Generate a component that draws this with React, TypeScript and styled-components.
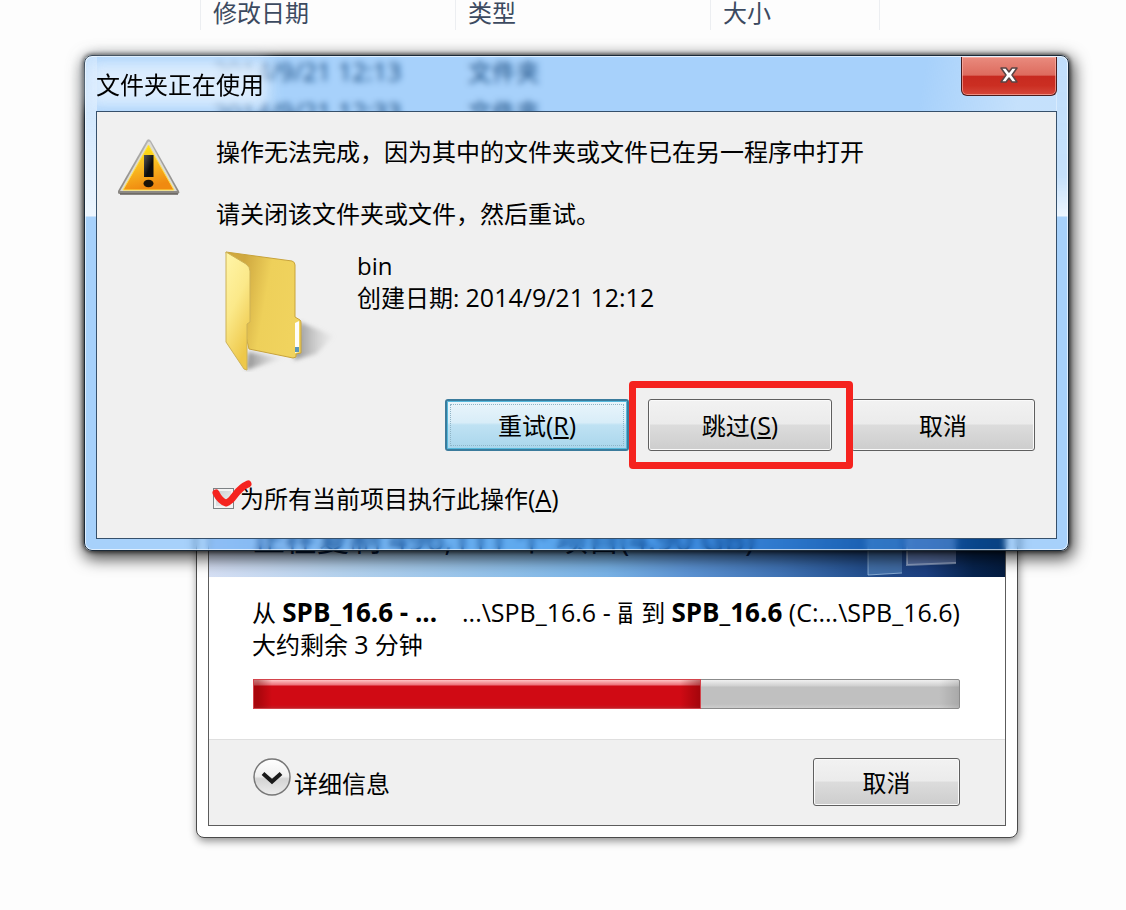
import React from "react";
import styled, { createGlobalStyle, css } from "styled-components";

const GlobalStyle = createGlobalStyle`
  *, *::before, *::after { box-sizing: border-box; }
  body {
    margin: 0;
    background: #fdfdfd;
    color: #000;
    font-family: "Open Sans", "Noto Sans CJK SC", sans-serif;
    font-size: 24px;
    line-height: 32px;
  }
  h1, h2, p { margin: 0; font-size: inherit; font-weight: 400; }
`;

const Desktop = styled.main`
  display: grid;
  grid-template: 1fr / minmax(0, 1fr);
  min-height: 100vh;
  overflow: hidden;
`;

/* Latin runs are set slightly larger so they balance the Chinese glyphs */
const Latin = styled.span`
  font-size: 25px;
  line-height: 1;
`;

const Strong = styled.b`
  font-size: 26px;
  line-height: 1;
`;

/* ---------- file list behind the windows ---------- */

const ListLayer = styled.div`
  grid-area: 1 / 1;
  padding-left: 200px;
`;

const FileTable = styled.table`
  border-collapse: collapse;
  table-layout: fixed;
  width: 680px;
`;

const HeadCell = styled.th<{ $width: number }>`
  width: ${(p) => p.$width}px;
  height: 52px;
  padding: 0;
  vertical-align: top;
  text-align: left;
  font-weight: 400;
  color: #3c4a60;
`;

const HeadLabel = styled.div<{ $last?: boolean }>`
  height: 30px;
  padding-left: 12px;
  line-height: 26px;
  border-left: 1px solid #eceef1;
  ${(p) => p.$last && css`border-right: 1px solid #eceef1;`}
`;

const FileCell = styled.td`
  height: 40px;
  padding: 0 0 0 13px;
  color: #1c2c3c;
`;

/* ---------- windows ---------- */

const WindowLayer = styled.div`
  grid-area: 1 / 1;
  padding: 55px 57px 72px 84px;
`;

const GlassDialog = styled.section`
  position: relative;
  z-index: 2;
  padding: 0 11px 11px;
  border: 1px solid #1b2a38;
  border-radius: 8px;
  background:
    linear-gradient(180deg, rgba(255, 255, 255, 0.3), rgba(255, 255, 255, 0.8) 160px, transparent 161px) left top / 12px 100% no-repeat,
    linear-gradient(180deg, rgba(255, 255, 255, 0.3), rgba(255, 255, 255, 0.35) 120px, rgba(255, 255, 255, 0.8) 160px, transparent 161px) right top / 12px 100% no-repeat,
    linear-gradient(100deg, transparent 30%, rgba(255, 255, 255, 0.35) 80%) right 11px top / 190px 55px no-repeat,
    rgba(13, 130, 247, 0.36);
  backdrop-filter: blur(3px);
  box-shadow:
    inset 0 0 0 1px rgba(255, 255, 255, 0.65),
    0 0 4px 1px rgba(0, 0, 0, 0.65),
    2px 5px 16px 3px rgba(0, 0, 0, 0.7);
`;

const TitleBar = styled.header`
  display: flex;
  justify-content: space-between;
  align-items: flex-start;
  height: 55px;
`;

const Title = styled.h1`
  position: relative;
  margin-top: 13px;
  &::before {
    content: "";
    position: absolute;
    z-index: -1;
    inset: -8px -4px -6px -8px;
    background: rgba(226, 240, 254, 0.92);
    filter: blur(8px);
  }
`;

const CloseButton = styled.button`
  display: flex;
  align-items: center;
  justify-content: center;
  width: 96px;
  height: 39px;
  margin-top: 1px;
  padding: 0 0 2px;
  border: 1px solid #4a1c1c;
  border-top: 0;
  border-radius: 0 0 6px 6px;
  background: linear-gradient(180deg, #e98b7e 0, #dd6b5e 48%, #c72a20 50%, #cb2e22 75%, #d5473a 100%);
  box-shadow: inset 0 0 0 1px rgba(255, 190, 180, 0.6);
`;

const DialogPanel = styled.div`
  display: grid;
  grid-template-columns: 98px minmax(0, 1fr);
  padding: 24px 21px 23px;
  border: 1px solid #36506b;
  background: #f0f0f0;
`;

const WarningSlot = styled.div`
  padding-top: 2px;
`;

const Message = styled.div`
  display: grid;
  gap: 30px;
`;

const ItemRow = styled.div`
  display: flex;
  margin-top: 18px;
`;

const ItemInfo = styled.div`
  padding-top: 2px;
`;

const ButtonRow = styled.div`
  display: flex;
  justify-content: flex-end;
  gap: 19px;
  margin-top: 27px;
`;

const PushButton = styled.button<{ $primary?: boolean; $compact?: boolean }>`
  width: ${(p) => (p.$compact ? 147 : 184)}px;
  height: ${(p) => (p.$compact ? 48 : 52)}px;
  padding: 2px 0 0;
  border: 1px solid #5f5f5f;
  border-radius: 3px;
  background: linear-gradient(180deg, #f2f2f2 0, #ebebeb 48%, #dcdcdc 50%, #cdcdcd 100%);
  box-shadow: inset 0 0 0 1px #fafafa;
  color: #000;
  font: inherit;
  ${(p) =>
    p.$primary &&
    css`
      border: 2px solid #3b7b9c;
      background: linear-gradient(180deg, #eaf5fb 0, #d8edf8 45%, #bfe2f3 50%, #a9d6ec 100%);
      box-shadow: inset 0 0 0 1px #57b9dc;
      outline: 1px dotted #8fb4c6;
      outline-offset: -6px;
    `}
`;

const Highlight = styled.div`
  position: relative;
  display: flex;
  &::after {
    content: "";
    position: absolute;
    inset: -18px -21px -18px -19px;
    border: 7px solid #f5231f;
    border-radius: 4px;
    pointer-events: none;
  }
`;

const CheckRow = styled.div`
  position: relative;
  display: flex;
  align-items: center;
  gap: 6px;
  margin: 32px 0 0 -3px;
`;

const CheckBox = styled.input`
  appearance: none;
  width: 21px;
  height: 21px;
  margin: 0 0 2px;
  border: 1px solid #7d8285;
  background: linear-gradient(135deg, #c5c9cd, #f6f6f6);
  box-shadow: inset 0 0 0 2px #f4f4f4;
`;

const RedTick = styled.svg`
  position: absolute;
  left: -2px;
  top: -4px;
  pointer-events: none;
`;

/* ---------- copy progress window ---------- */

const ProgressWindow = styled.section`
  position: relative;
  z-index: 1;
  margin: -67px 51px 0 112px;
  padding: 11px;
  border: 1px solid #4a4a4a;
  border-radius: 8px;
  background: #fff;
  box-shadow: 1px 3px 8px rgba(0, 0, 0, 0.45);
`;

const ProgressPanel = styled.div`
  border: 1px solid #5c5c5c;
  background: #fff;
`;

const Banner = styled.header`
  position: relative;
  height: 80px;
  padding-left: 44px;
  overflow: hidden;
  background: linear-gradient(90deg, #d6e0f5 0, #b4d2ee 17%, #8fc0ea 38%, #78b2e6 50%, #5c93d3 60%, #3f72b4 72%, #24508f 82%, #1c3f80 90%, #07244f 96%, #041c40 100%);
`;

const BannerTitle = styled.h2`
  position: relative;
  color: #06204a;
  font-size: 32px;
  line-height: 84px;
  white-space: nowrap;
`;

const BannerArt = styled.svg`
  position: absolute;
  right: 0;
  top: 0;
`;

const ProgressBody = styled.div`
  padding: 20px 45px 30px 43px;
`;

const CopyLine = styled.p`
  display: flex;
  gap: 8px;
  height: 32px;
  white-space: pre;
`;

const Source = styled.span`
  margin-right: auto;
`;

const ClippedGlyph = styled.span`
  display: inline-block;
  width: 16px;
  height: 32px;
  overflow: hidden;
  vertical-align: bottom;
`;

const Track = styled.div`
  height: 30px;
  margin: 18px 0 0 1px;
  border: 1px solid #8b8b8b;
  border-radius: 2px;
  background:
    linear-gradient(90deg, transparent calc(100% - 20px), rgba(0, 0, 0, 0.12)),
    linear-gradient(180deg, #f0f0f0 0, #cfcfcf 6px, #c0c0c0 7px, #c0c0c0 24px, #cdcdcd 100%);
`;

const Fill = styled.div`
  height: 30px;
  margin: -1px;
  border: 1px solid #d3444c;
  background:
    linear-gradient(90deg, rgba(110, 0, 0, 0.4) 4px, transparent 18px, transparent calc(100% - 20px), rgba(110, 0, 0, 0.45)),
    linear-gradient(180deg, #ffc4c4 0, #ec7078 5px, #d00a14 6px, #d00a14 25px, #c41c24 100%);
`;

const Footer = styled.footer`
  display: flex;
  justify-content: space-between;
  padding: 18px 45px 19px 44px;
  border-top: 1px solid #dfdfdf;
  background: #f0f0f0;
`;

const DetailsButton = styled.button`
  display: flex;
  gap: 3px;
  padding: 0;
  border: 0;
  background: none;
  color: #000;
  font: inherit;
`;

const DetailsText = styled.span`
  padding-top: 10px;
`;

const CloseIcon = () => (
  <svg width="20" height="18" viewBox="0 0 20 18" aria-hidden="true">
    <path
      d="M2 2h5l3 4 3-4h5l-5 7 5 7h-5l-3-4-3 4H2l5-7z"
      fill="#fff"
      stroke="#5b4444"
      strokeWidth="1.5"
      strokeLinejoin="round"
    />
  </svg>
);

const WarningIcon = () => (
  <svg width="64" height="60" viewBox="0 0 64 60" aria-hidden="true">
    <defs>
      <linearGradient id="warnFill" x1="0" y1="0" x2="0.3" y2="1">
        <stop offset="0" stopColor="#fff200" />
        <stop offset="0.45" stopColor="#fbc524" />
        <stop offset="1" stopColor="#f08a10" />
      </linearGradient>
      <linearGradient id="warnRim" x1="0" y1="0" x2="0" y2="1">
        <stop offset="0" stopColor="#b5b5b5" />
        <stop offset="1" stopColor="#8a8782" />
      </linearGradient>
      <linearGradient id="warnMark" x1="0" y1="0" x2="1" y2="1">
        <stop offset="0" stopColor="#555" />
        <stop offset="0.6" stopColor="#0c0c0c" />
      </linearGradient>
    </defs>
    <path d="M29 2q2-2 4 1l28 50q1 3-2 3H2q-3 0-2-3z" fill="url(#warnRim)" />
    <path d="M2 56h58" stroke="#66625c" strokeWidth="1.5" />
    <path d="M30 4q1-1 2 0l27 49H2z" fill="#dedcd2" />
    <path d="M30.5 7 56 52H5z" fill="url(#warnFill)" stroke="#ffe14a" />
    <path d="M26 17h9.500v22H26z" fill="url(#warnMark)" />
    <ellipse cx="30.500" cy="45.500" rx="5" ry="3.800" fill="#1c1408" />
  </svg>
);

const FolderIcon = () => (
  <svg width="141" height="124" viewBox="0 0 141 124" aria-hidden="true">
    <defs>
      <linearGradient id="folderFront" x1="0" y1="0" x2="0.4" y2="1">
        <stop offset="0" stopColor="#fff5a8" />
        <stop offset="0.5" stopColor="#fbe98a" />
        <stop offset="1" stopColor="#eec84a" />
      </linearGradient>
      <linearGradient id="folderBack" x1="0" y1="0" x2="1" y2="0.25">
        <stop offset="0" stopColor="#d3a93c" />
        <stop offset="0.25" stopColor="#cfa840" />
        <stop offset="0.6" stopColor="#eed05a" />
        <stop offset="1" stopColor="#f0d35e" />
      </linearGradient>
      <linearGradient id="folderShade" x1="0" y1="0" x2="1" y2="0">
        <stop offset="0" stopColor="#6c6c6c" stopOpacity="0.75" />
        <stop offset="1" stopColor="#b5b5b5" stopOpacity="0.05" />
      </linearGradient>
      <filter id="folderSoft" x="-20%" y="-20%" width="140%" height="140%">
        <feGaussianBlur stdDeviation="2" />
      </filter>
    </defs>
    <path d="M84 74l34 14-18 18-22 6z" fill="url(#folderShade)" filter="url(#folderSoft)" />
    <path d="M32 104l36 6-38 12z" fill="url(#folderShade)" filter="url(#folderSoft)" />
    <path d="M10 4 76 13q3 1 3 4v52l5 3q1 1 1 3v30l-5 1v3l-3 1-44-9z" fill="url(#folderBack)" stroke="#c8a33a" />
    <path d="M79 75l4-2v31l-4 1z" fill="#fdfdfb" />
    <path d="M79 99h4v5h-4z" fill="#5b95b8" />
    <path d="M10 4l20 12q4 3 4 7v51l-3 2v46l-3-1-18-27z" fill="url(#folderFront)" stroke="#cdb257" />
  </svg>
);

const ChevronCircle = () => (
  <svg width="38" height="38" viewBox="0 0 38 38" aria-hidden="true">
    <defs>
      <linearGradient id="chevronDisc" x1="0" y1="0" x2="0" y2="1">
        <stop offset="0" stopColor="#fff" />
        <stop offset="0.48" stopColor="#f0f0f0" />
        <stop offset="0.55" stopColor="#d4d4d4" />
        <stop offset="1" stopColor="#ededed" />
      </linearGradient>
    </defs>
    <circle cx="19" cy="19" r="18" fill="url(#chevronDisc)" stroke="#777" strokeWidth="1.5" />
    <path d="M10 15.500l9 8 9-8" fill="none" stroke="#1a1a1a" strokeWidth="4" />
  </svg>
);

const files = [
  { date: "2014/9/21 12:13", type: "文件夹" },
  { date: "2014/9/21 12:33", type: "文件夹" },
];

const FileList = () => (
  <ListLayer>
    <FileTable>
      <thead>
        <tr>
          <HeadCell $width={255}><HeadLabel>修改日期</HeadLabel></HeadCell>
          <HeadCell $width={255}><HeadLabel>类型</HeadLabel></HeadCell>
          <HeadCell $width={170}><HeadLabel $last>大小</HeadLabel></HeadCell>
        </tr>
      </thead>
      <tbody>
        {files.map((file) => (
          <tr key={file.date}>
            <FileCell><Latin>{file.date}</Latin></FileCell>
            <FileCell>{file.type}</FileCell>
            <FileCell />
          </tr>
        ))}
      </tbody>
    </FileTable>
  </ListLayer>
);

const FolderInUseDialog = () => (
  <GlassDialog role="dialog" aria-labelledby="dialog-title">
    <TitleBar>
      <Title id="dialog-title">文件夹正在使用</Title>
      <CloseButton type="button" aria-label="关闭"><CloseIcon /></CloseButton>
    </TitleBar>
    <DialogPanel>
      <WarningSlot><WarningIcon /></WarningSlot>
      <div>
        <Message>
          <p>操作无法完成，因为其中的文件夹或文件已在另一程序中打开</p>
          <p>请关闭该文件夹或文件，然后重试。</p>
        </Message>
        <ItemRow>
          <FolderIcon />
          <ItemInfo>
            <p>bin</p>
            <p>创建日期: <Latin>2014/9/21 12:12</Latin></p>
          </ItemInfo>
        </ItemRow>
        <ButtonRow>
          <PushButton type="button" $primary>重试<Latin>(<u>R</u>)</Latin></PushButton>
          <Highlight>
            <PushButton type="button">跳过<Latin>(<u>S</u>)</Latin></PushButton>
          </Highlight>
          <PushButton type="button">取消</PushButton>
        </ButtonRow>
        <CheckRow>
          <CheckBox type="checkbox" id="apply-all" />
          <label htmlFor="apply-all">为所有当前项目执行此操作<Latin>(<u>A</u>)</Latin></label>
          <RedTick width="44" height="32" viewBox="0 0 44 32" aria-hidden="true">
            <path
              d="M5 14q4 8 10 10 4-1 9-8 6-8 13-11"
              fill="none"
              stroke="#f5231f"
              strokeWidth="7"
              strokeLinecap="round"
              strokeLinejoin="round"
            />
          </RedTick>
        </CheckRow>
      </div>
    </DialogPanel>
  </GlassDialog>
);

const CopyProgress = ({ percent }: { percent: number }) => (
  <ProgressWindow aria-label="复制">
    <ProgressPanel>
      <Banner>
        <BannerArt width="150" height="80" viewBox="0 0 150 80" aria-hidden="true">
          <path d="M13 10h34v66l-34 2z" fill="#6b9ccc" opacity="0.45" />
          <path d="M13 10v68l34-2" fill="none" stroke="#a9c9e8" opacity="0.7" />
          <path d="M51 6h50v60l-49 2z" fill="#8d9cc8" opacity="0.55" />
          <path d="M52 6v62l49-2" fill="none" stroke="#dce6f8" strokeWidth="2" opacity="0.5" />
        </BannerArt>
        <BannerTitle>正在复制 496,111 个 项目(4.90 GB)</BannerTitle>
      </Banner>
      <ProgressBody>
        <CopyLine>
          <Source>从 <Strong>SPB_16.6 - ...</Strong></Source>
          <span><Latin>...\SPB_16.6 - </Latin><ClippedGlyph>副</ClippedGlyph></span>
          <span>到 <Strong>SPB_16.6</Strong><Latin> (C:...\SPB_16.6)</Latin></span>
        </CopyLine>
        <p>大约剩余 <Latin>3</Latin> 分钟</p>
        <Track role="progressbar" aria-valuenow={percent} aria-valuemin={0} aria-valuemax={100}>
          <Fill style={{ width: `${percent}%` }} />
        </Track>
      </ProgressBody>
      <Footer>
        <DetailsButton type="button">
          <ChevronCircle />
          <DetailsText>详细信息</DetailsText>
        </DetailsButton>
        <PushButton type="button" $compact>取消</PushButton>
      </Footer>
    </ProgressPanel>
  </ProgressWindow>
);

export default function App() {
  return (
    <>
      <GlobalStyle />
      <Desktop>
        <FileList />
        <WindowLayer>
          <FolderInUseDialog />
          <CopyProgress percent={63.5} />
        </WindowLayer>
      </Desktop>
    </>
  );
}
